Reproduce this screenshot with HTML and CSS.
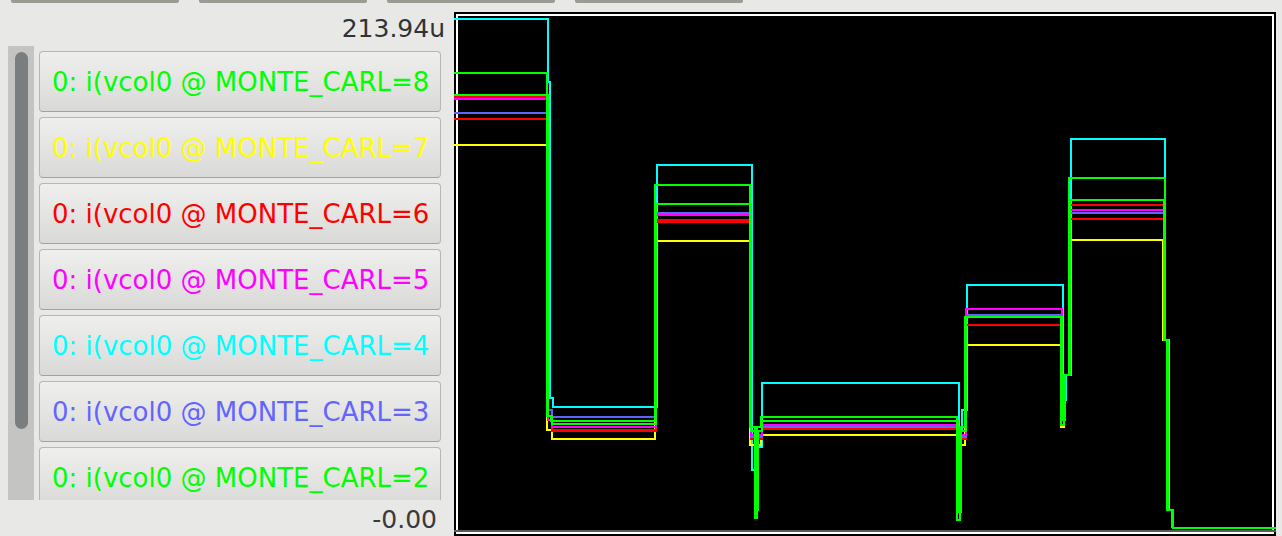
FILE: index.html
```html
<!DOCTYPE html>
<html>
<head>
<meta charset="utf-8">
<link rel="stylesheet" href="styles.css">
</head>
<body>
<div class="toolbar"><span class="tb"></span><span class="tb"></span><span class="tb"></span><span class="tb"></span></div>
<div class="main">
  <div class="side">
    <div class="ymax">213.94u</div>
    <div class="list">
      <div class="trough"><div class="thumb"></div></div>
      <div class="items">
        <div class="item c-green">0: i(vcol0 @ MONTE_CARL=8</div>
        <div class="item c-yellow">0: i(vcol0 @ MONTE_CARL=7</div>
        <div class="item c-red">0: i(vcol0 @ MONTE_CARL=6</div>
        <div class="item c-magenta">0: i(vcol0 @ MONTE_CARL=5</div>
        <div class="item c-cyan">0: i(vcol0 @ MONTE_CARL=4</div>
        <div class="item c-blue">0: i(vcol0 @ MONTE_CARL=3</div>
        <div class="item c-green">0: i(vcol0 @ MONTE_CARL=2</div>
      </div>
    </div>
    <div class="ymin">-0.00</div>
  </div>
  <svg class="plot" width="822" height="524" viewBox="454 12 822 524" xmlns="http://www.w3.org/2000/svg" shape-rendering="crispEdges">
    <rect x="454" y="12" width="822" height="524" fill="#000"/>
    <rect x="457" y="15" width="816" height="518" fill="none" stroke="#fff" stroke-width="2"/>
    <line x1="454" y1="531" x2="1276" y2="531" stroke="#5a5a5a" stroke-width="2"/>
    <g fill="none" stroke-width="2">
      <path stroke="#00ffff" d="M454,19 H548 V82 H550 V398 H553 V407 H657 V165 H752 V470 H757 V447 H762 V383 H959 V430 H962 V410 H967 V285 H1063 V400 H1066 V375 H1071 V139 H1165 V340 H1169 V510 H1172 V528"/>
      <path stroke="#ffff00" d="M454,145 H547 V430 H552 V439 H655 V241 H750 V445 H755 V505 H757 V445 H761 V435 H957 V500 H960 V445 H965 V345 H1061 V427 H1064 V375 H1069 V240 H1163 V340 H1167 V510 H1172 V528"/>
      <path stroke="#ff0000" d="M454,119 H548 V420 H552 V430 H656 V222 H751 V438 H756 V480 H758 V438 H762 V428 H958 V490 H961 V438 H966 V325 H1062 V410 H1065 V375 H1070 V219 H1164 V340 H1168 V510 H1172 V528"/>
      <path stroke="#ff0000" d="M454,97 H548 V420 H552 V431 H656 V220 H751 V439 H756 V490 H758 V439 H762 V429 H958 V505 H961 V439 H966 V325 H1062 V415 H1065 V375 H1070 V205 H1164 V340 H1168 V510 H1172 V528"/>
      <path stroke="#6262ff" d="M454,113 H548 V410 H552 V417 H656 V213 H751 V437 H756 V460 H758 V437 H762 V427 H958 V470 H961 V437 H966 V315 H1062 V400 H1065 V375 H1070 V213 H1164 V340 H1168 V510 H1172 V528"/>
      <path stroke="#ff00ff" d="M454,99 H548 V420 H552 V427 H656 V215 H751 V435 H756 V470 H758 V435 H762 V425 H958 V480 H961 V435 H966 V309 H1062 V410 H1065 V375 H1070 V210 H1164 V340 H1168 V510 H1172 V528"/>
      <path stroke="#00ff00" d="M454,95 H548 V416 H552 V424 H656 V204 H751 V431 H756 V510 H758 V431 H762 V421 H958 V512 H961 V431 H966 V317 H1062 V420 H1065 V375 H1070 V200 H1164 V340 H1168 V510 H1172 V528"/>
      <path stroke="#00ff00" d="M454,73 H547 V416 H551 V421 H655 V185 H750 V427 H755 V518 H757 V427 H761 V417 H957 V520 H960 V427 H965 V317 H1061 V425 H1064 V375 H1069 V178 H1165 V340 H1167 V510 H1173 V528 H1276"/>
    </g>
  </svg>
</div>
</body>
</html>
```
FILE: styles.css
```css
html, body {
  margin: 0;
  background: #e8e8e6;
  overflow: hidden;
}
body {
  width: 1282px;
  height: 536px;
  font-family: "DejaVu Sans", sans-serif;
}
.toolbar {
  display: flex;
  gap: 20px;
  padding-left: 11px;
  height: 3px;
}
.tb {
  width: 168px;
  height: 3px;
  background: #9b9b93;
  border-radius: 0 0 2px 2px;
}
.main {
  display: flex;
  padding-top: 9px;
}
.side {
  width: 454px;
  height: 524px;
  display: flex;
  flex-direction: column;
  flex-shrink: 0;
}
.ymax {
  height: 34px;
  box-sizing: border-box;
  padding: 2px 9px 0 0;
  text-align: right;
  font-size: 25px;
  line-height: 30px;
  color: #2e3436;
}
.list {
  height: 454px;
  display: flex;
  padding-left: 8px;
  flex-shrink: 0;
}
.trough {
  width: 26px;
  box-sizing: border-box;
  background: #c4c4c2;
  padding: 6px 0 0 7px;
}
.thumb {
  width: 13px;
  height: 377px;
  background: #7a7e7f;
  border-radius: 7px;
}
.items {
  margin-left: 5px;
  width: 402px;
  overflow: hidden;
  box-sizing: border-box;
  padding-top: 5px;
  display: flex;
  flex-direction: column;
  gap: 5px;
}
.item {
  flex-shrink: 0;
  height: 61px;
  box-sizing: border-box;
  border: 1px solid #b6b6b4;
  border-bottom-color: #a2a2a0;
  border-radius: 4px;
  background: linear-gradient(#efefed, #d9d9d7);
  display: flex;
  align-items: center;
  padding-left: 12px;
  font-size: 26px;
  line-height: 30px;
  white-space: nowrap;
}
.c-green { color: #00ff00; }
.c-yellow { color: #ffff00; }
.c-red { color: #ff0000; }
.c-magenta { color: #ff00ff; }
.c-cyan { color: #00ffff; }
.c-blue { color: #6464ff; }
.ymin {
  padding: 5px 17px 0 0;
  text-align: right;
  font-size: 25px;
  line-height: 30px;
  color: #3a3a3a;
}
.plot {
  display: block;
  flex-shrink: 0;
}
```
